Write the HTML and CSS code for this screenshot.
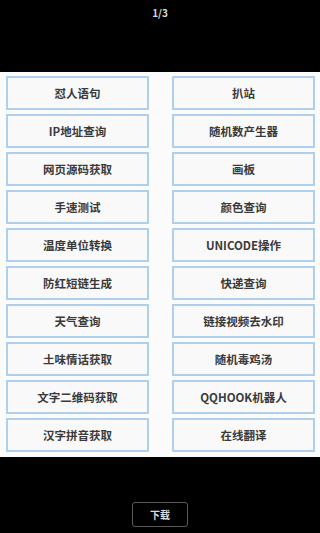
FILE: index.html
```html
<!DOCTYPE html>
<html lang="zh">
<head>
    <meta charset="UTF-8">
    <meta name="viewport" content="width=device-width, initial-scale=1.0">
    <title>工具箱</title>
    <link rel="stylesheet" href="styles.css">
</head>
<body>

<!-- Top bar -->
<header class="top">
    <div class="pager">1/3</div>
</header>

<!-- Tool grid -->
<section class="tools">
    <div class="tool">怼人语句</div>
    <div class="tool">扒站</div>
    <div class="tool">IP地址查询</div>
    <div class="tool">随机数产生器</div>
    <div class="tool">网页源码获取</div>
    <div class="tool">画板</div>
    <div class="tool">手速测试</div>
    <div class="tool">颜色查询</div>
    <div class="tool">温度单位转换</div>
    <div class="tool">UNICODE操作</div>
    <div class="tool">防红短链生成</div>
    <div class="tool">快递查询</div>
    <div class="tool">天气查询</div>
    <div class="tool">链接视频去水印</div>
    <div class="tool">土味情话获取</div>
    <div class="tool">随机毒鸡汤</div>
    <div class="tool">文字二维码获取</div>
    <div class="tool">QQHOOK机器人</div>
    <div class="tool">汉字拼音获取</div>
    <div class="tool">在线翻译</div>
</section>

<!-- Bottom bar -->
<footer class="bottom">
    <button class="download">下载</button>
</footer>

</body>
</html>
```

FILE: styles.css
```css
body {
    margin: 0;
    padding: 0;
    background: #000;
    font-family: "Noto Sans CJK SC", "Noto Sans", sans-serif;
    width: 320px;
    height: 533px;
    overflow: hidden;
}

.top {
    height: 72px;
    display: flex;
    justify-content: center;
}

.pager {
    color: #d8d8d8;
    font-size: 10px;
    font-weight: bold;
    margin-top: 5px;
}

.tools {
    background: #fbfbfb;
    height: 385px;
    box-sizing: border-box;
    padding: 4px 6px 0 6px;
    display: grid;
    grid-template-columns: 143px 143px;
    grid-auto-rows: 34px;
    column-gap: 23px;
    row-gap: 4px;
}

.tool {
    border: 2px solid #aed0ec;
    background: #f9f9f9;
    color: #3a3a3a;
    font-size: 11.5px;
    font-weight: bold;
    display: flex;
    align-items: center;
    justify-content: center;
}

.bottom {
    height: 76px;
    display: flex;
    justify-content: center;
    align-items: flex-start;
}

.download {
    margin-top: 45px;
    width: 56px;
    height: 25px;
    background: #000;
    border: 1.5px solid #5a5a5a;
    border-radius: 3px;
    color: #dcdcdc;
    font-family: "Noto Sans CJK SC", sans-serif;
    font-size: 10px;
    font-weight: bold;
    padding: 0;
}
```
